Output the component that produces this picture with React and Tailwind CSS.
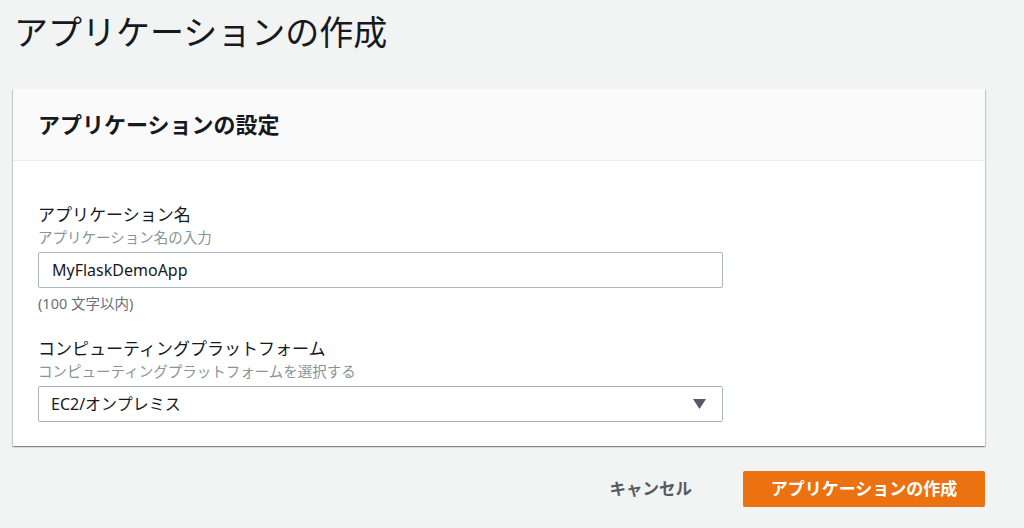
import React from 'react';

const FONT = { fontFamily: '"Noto Sans", "Noto Sans CJK JP", sans-serif' };

function Field({ label, hint, children, note }) {
    return (
        <div>
            <div className="text-[17px] leading-[24px] text-[#16191f]">{label}</div>
            <div className="text-[14.5px] leading-[20px] text-[#879596]">{hint}</div>
            <div className="mt-[5px]">{children}</div>
            {note && <div className="mt-[5px] text-[14.5px] leading-[20px] text-[#687078]">{note}</div>}
        </div>
    );
}

export default function App() {
    return (
        <div className="w-full h-[528px] overflow-hidden bg-[#f2f3f3] px-[13px]" style={FONT}>
            {/* Title */}
            <div className="h-[64px] flex items-center pl-px text-[34px] text-[#16191f]">
                アプリケーションの作成
            </div>

            {/* Settings card */}
            <div className="mt-[25px] w-[972px] bg-white shadow-[0_1px_1px_0_rgba(0,28,36,0.3),1px_1px_1px_0_rgba(0,28,36,0.15),-1px_1px_1px_0_rgba(0,28,36,0.15)]">
                <div className="h-[72px] flex items-center px-[25px] bg-[#fafafa] border-b border-[#eaeded]">
                    <h2 className="text-[22px] font-bold text-[#16191f]">アプリケーションの設定</h2>
                </div>
                <div className="px-[25px] pt-[42px] pb-[24px]">
                    <Field label="アプリケーション名" hint="アプリケーション名の入力" note="(100 文字以内)">
                        <div className="w-[685px] h-[36px] flex items-center px-[13px] border border-[#aab7b8] rounded-[2px] text-[16px] text-[#16191f]">
                            MyFlaskDemoApp
                        </div>
                    </Field>
                    <div className="mt-[24px]">
                        <Field label="コンピューティングプラットフォーム" hint="コンピューティングプラットフォームを選択する">
                            <div className="w-[685px] h-[36px] flex items-center justify-between pl-[12px] pr-[16px] border border-[#aab7b8] rounded-[2px] text-[16px] text-[#16191f]">
                                <span>EC2/オンプレミス</span>
                                <svg width="13" height="10" viewBox="0 0 13 10">
                                    <path d="M0 0 L13 0 L6.5 10 Z" fill="#545b64" />
                                </svg>
                            </div>
                        </Field>
                    </div>
                </div>
            </div>

            {/* Actions */}
            <div className="mt-[25px] w-[972px] flex justify-end items-center gap-[31px]">
                <button className="h-[36px] px-[20px] text-[16.5px] font-bold text-[#545b64]">キャンセル</button>
                <button className="h-[36px] w-[242px] rounded-[2px] bg-[#ec7211] text-[17px] font-bold text-white">
                    アプリケーションの作成
                </button>
            </div>
        </div>
    );
}
